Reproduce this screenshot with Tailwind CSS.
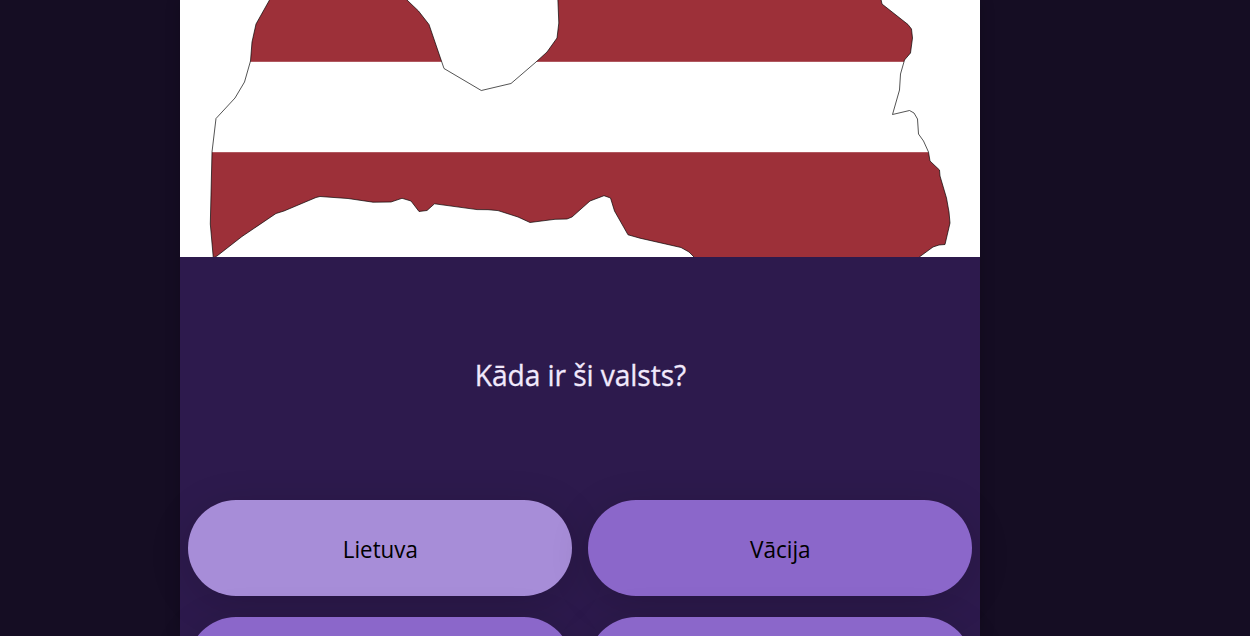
<!DOCTYPE html>
<html lang="lv">
<head>
<meta charset="utf-8">
<title>Kāda ir ši valsts?</title>
<script src="https://cdn.jsdelivr.net/npm/@tailwindcss/browser@4"></script>
</head>
<body class="h-[636px] overflow-hidden bg-[#150d23] font-['Open_Sans','Noto_Sans',sans-serif]">
<main class="ml-[180px] h-[636px] w-[800px] bg-[#2d1a4d] shadow-[0_0_14px_rgba(0,0,0,0.2)]">
  <svg class="block h-[257px] w-[800px] bg-white" viewBox="180 0 800 257" aria-hidden="true">
    <defs>
      <path id="land" d="M276 -10L269.500 0L256 24L252 42L250.500 61L244.500 82L235 98L216 118.500L212 152L210.300 224L213.300 258L217 256L242 236.500L276 213.500L284 211L316 197.500L320 196.500L348 198.500L373 202.200L391 202L402 198.300L411 201L419 211.500L427 210.500L434.500 203.800L477 209.600L488 209.700L498 210.600L518 217L530 222.500L555 219.300L567 219L572 217L590 201L604 195.700L610.500 198L614.500 211L628 234.800L640 238.200L681 247.500L689 252L697 260L914 261L920 256.500L933 247L939 245L945 244.500L950 223L949 212L946.500 198L940 176L939.500 170L930 161L928.500 152L923.500 141L918.500 134L917.500 119L914 113L909.500 110.500L892.500 114.500L899.500 90L900.500 74L904.500 60L910.500 53L912.500 38L911.500 29L908 24.500L882 4L879 -10L557.500 -10L558.800 23L557 38L547 52L536 62L511 83.500L481.300 90.500L444 68.500L429 24.500L418.500 11L407 0L395 -10Z"/>
      <clipPath id="landClip"><use href="#land"/></clipPath>
    </defs>
    <g clip-path="url(#landClip)" fill="#9d3039">
      <rect x="180" y="-10" width="800" height="71.800"/>
      <rect x="180" y="152.200" width="800" height="120"/>
    </g>
    <use href="#land" fill="none" stroke="#000" stroke-opacity=".75" stroke-width=".9"/>
  </svg>
  <section class="flex h-[235px] items-center justify-center">
    <h1 class="scale-x-94 text-[30px] leading-10 tracking-[-0.1px] text-[#f1e9fc] [-webkit-text-stroke:0.3px_#f1e9fc]">Kāda ir ši valsts?</h1>
  </section>
  <div class="grid grid-cols-2 gap-x-4 gap-y-[21px] px-2 pt-2 text-2xl text-black">
    <button class="h-24 rounded-full bg-[#a78dd8] pt-0.5 shadow-[0_8px_40px_rgba(0,0,0,0.15)]"><span class="inline-block scale-x-93">Lietuva</span></button>
    <button class="h-24 rounded-full bg-[#8b67ca] pt-0.5 shadow-[0_8px_40px_rgba(0,0,0,0.15)]"><span class="inline-block scale-x-94">Vācija</span></button>
    <button class="h-24 rounded-full bg-[#8b67ca] shadow-[0_8px_40px_rgba(0,0,0,0.15)]"></button>
    <button class="h-24 rounded-full bg-[#8b67ca] shadow-[0_8px_40px_rgba(0,0,0,0.15)]"></button>
  </div>
</main>
</body>
</html>
